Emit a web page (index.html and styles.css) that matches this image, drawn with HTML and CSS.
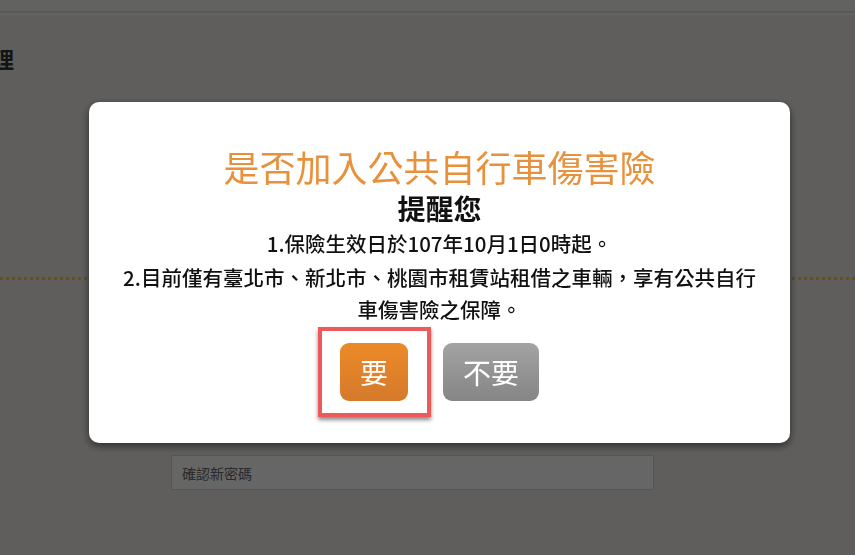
FILE: index.html
```html
<!DOCTYPE html>
<html lang="zh-Hant">
<head>
  <meta charset="UTF-8">
  <meta name="viewport" content="width=device-width, initial-scale=1.0">
  <title>會員密碼管理</title>
  <link rel="stylesheet" href="styles.css">
</head>
<body>
  <header class="top-bar"></header>
  <main class="page">
    <h2 class="page-title">會員密碼管理</h2>
    <div class="divider"></div>
    <form class="pwd-form">
      <input type="password" class="pwd-input" placeholder="確認新密碼">
    </form>
  </main>

  <div class="overlay">
    <div class="dialog">
      <h1 class="dialog-title">是否加入公共自行車傷害險</h1>
      <h3 class="dialog-sub">提醒您</h3>
      <p class="dialog-text">1.保險生效日於107年10月1日0時起。</p>
      <p class="dialog-text">2.目前僅有臺北市、新北市、桃園市租賃站租借之車輛，享有公共自行車傷害險之保障。</p>
      <div class="dialog-actions">
        <button class="btn btn-yes">要<span class="mark"></span></button>
        <button class="btn btn-no">不要</button>
      </div>
    </div>
  </div>
</body>
</html>
```

FILE: styles.css
```css
body {
  margin: 0;
  background-color: #eeece8;
  font-family: "Noto Sans CJK TC", "Liberation Sans", sans-serif;
  overflow: hidden;
}

.top-bar {
  height: 11px;
  background-color: #f6f5f2;
  border-bottom: 2px solid #e4e2de;
  box-shadow: 0 2px 0 #fafafa;
}

.page {
  padding-top: 30px;
}

.page-title {
  margin: 0 0 0 -118px;
  font-size: 22px;
  line-height: 30px;
  color: #333;
}

.divider {
  margin-top: 204px;
  border-top: 3px dotted #f4cc50;
}

.pwd-form {
  padding: 175px 0 0 171px;
}

.pwd-input {
  display: block;
  width: 483px;
  height: 35px;
  box-sizing: border-box;
  padding: 0 10px;
  border: 1px solid #f6d67a;
  background-color: #fff;
  font-family: inherit;
  font-size: 14px;
}

.pwd-input::placeholder {
  color: #6a6a6a;
}

.overlay {
  position: fixed;
  left: 0;
  top: 0;
  width: 100%;
  height: 100%;
  background-color: rgba(0, 0, 0, 0.6);
}

.dialog {
  width: 701px;
  box-sizing: border-box;
  margin: 102px 0 0 89px;
  padding: 44px 30px 42px;
  background-color: #fff;
  border-radius: 10px;
  box-shadow: 0 3px 8px rgba(0, 0, 0, 0.55);
  text-align: center;
}

.dialog-title {
  margin: 0 0 5px;
  font-size: 36px;
  line-height: 40px;
  font-weight: normal;
  color: #e8913c;
}

.dialog-sub {
  margin: 0;
  font-size: 28px;
  line-height: 34px;
  font-weight: bold;
  color: #111;
}

.dialog-text {
  margin: 2px 0 0;
  font-size: 20.5px;
  line-height: 32px;
  font-weight: 500;
  color: #111;
}

.dialog-actions {
  display: flex;
  justify-content: center;
  gap: 35px;
  margin-top: 18px;
}

.btn {
  position: relative;
  height: 58px;
  padding: 0 20px;
  border: none;
  border-radius: 9px;
  font-family: inherit;
  font-size: 28px;
  color: #fff;
  cursor: pointer;
}

.btn-yes {
  background: linear-gradient(#ec8a27, #d57a2c);
}

.btn-no {
  background: linear-gradient(#a3a3a3, #858585);
}

.mark {
  position: absolute;
  left: -22px;
  right: -23px;
  top: -16px;
  bottom: -16px;
  border: 4px solid #ec5a5a;
  box-shadow: 0 3px 4px rgba(0, 0, 0, 0.45);
}
```
